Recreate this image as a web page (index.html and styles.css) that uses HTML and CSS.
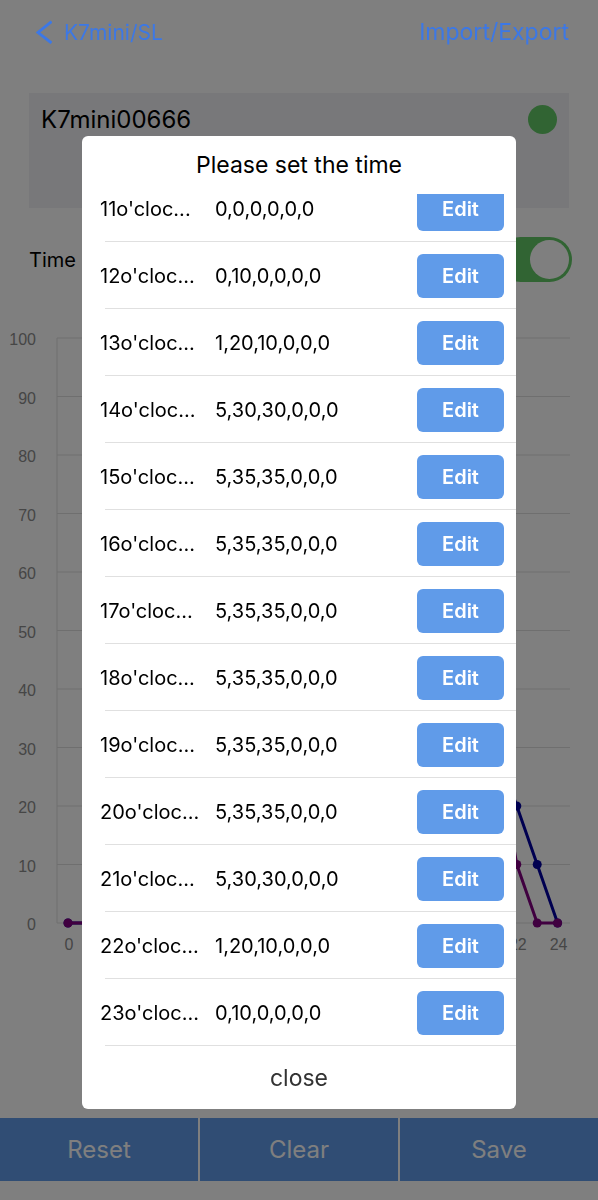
FILE: index.html
```
<!DOCTYPE html>
<html lang="en">
<head>
  <meta charset="UTF-8">
  <meta name="viewport" content="width=device-width, initial-scale=1">
  <title>K7mini/SL</title>
  <link rel="stylesheet" href="styles.css">
</head>
<body>

  <div class="page">
    <header class="navbar">
      <a class="back" href="#">
        <svg class="back-icon" viewBox="0 0 16 24" aria-hidden="true">
          <path d="M15.5 1.5 L2 12.5 L15.5 23" fill="none" stroke="currentColor" stroke-width="2.8"/>
        </svg>
        K7mini/SL
      </a>
      <a class="nav-action" href="#">Import/Export</a>
    </header>

    <main class="main">
      <section class="device">
        <span>K7mini00666</span>
        <span class="status"></span>
      </section>

      <div class="time-row">
        <label for="time-switch">Time</label>
        <input class="switch" id="time-switch" type="checkbox" role="switch" checked>
      </div>

      <svg class="chart" id="chart" viewBox="0 0 598 650"></svg>
    </main>

    <footer class="toolbar">
      <button>Reset</button>
      <button>Clear</button>
      <button>Save</button>
    </footer>
  </div>

  <!-- Popup -->
  <div class="overlay">
    <div class="modal" role="dialog" aria-labelledby="modal-title">
      <h2 class="modal-title" id="modal-title">Please set the time</h2>
      <ul class="hours">
        <li class="hour"><span class="hour-name">11o'cloc...</span><span class="hour-value">0,0,0,0,0,0</span><button class="edit">Edit</button></li>
        <li class="hour"><span class="hour-name">12o'cloc...</span><span class="hour-value">0,10,0,0,0,0</span><button class="edit">Edit</button></li>
        <li class="hour"><span class="hour-name">13o'cloc...</span><span class="hour-value">1,20,10,0,0,0</span><button class="edit">Edit</button></li>
        <li class="hour"><span class="hour-name">14o'cloc...</span><span class="hour-value">5,30,30,0,0,0</span><button class="edit">Edit</button></li>
        <li class="hour"><span class="hour-name">15o'cloc...</span><span class="hour-value">5,35,35,0,0,0</span><button class="edit">Edit</button></li>
        <li class="hour"><span class="hour-name">16o'cloc...</span><span class="hour-value">5,35,35,0,0,0</span><button class="edit">Edit</button></li>
        <li class="hour"><span class="hour-name">17o'cloc...</span><span class="hour-value">5,35,35,0,0,0</span><button class="edit">Edit</button></li>
        <li class="hour"><span class="hour-name">18o'cloc...</span><span class="hour-value">5,35,35,0,0,0</span><button class="edit">Edit</button></li>
        <li class="hour"><span class="hour-name">19o'cloc...</span><span class="hour-value">5,35,35,0,0,0</span><button class="edit">Edit</button></li>
        <li class="hour"><span class="hour-name">20o'cloc...</span><span class="hour-value">5,35,35,0,0,0</span><button class="edit">Edit</button></li>
        <li class="hour"><span class="hour-name">21o'cloc...</span><span class="hour-value">5,30,30,0,0,0</span><button class="edit">Edit</button></li>
        <li class="hour"><span class="hour-name">22o'cloc...</span><span class="hour-value">1,20,10,0,0,0</span><button class="edit">Edit</button></li>
        <li class="hour"><span class="hour-name">23o'cloc...</span><span class="hour-value">0,10,0,0,0,0</span><button class="edit">Edit</button></li>
      </ul>
      <button class="close">close</button>
    </div>
  </div>

  <script src="chart.js"></script>
</body>
</html>
```
FILE: styles.css
```
* {
  box-sizing: border-box;
}

body {
  margin: 0;
  background: #fff;
  color: #000;
  font-family: Inter, "Liberation Sans", sans-serif;
  font-size: 20px;
}

button {
  padding: 0;
  border: none;
  font: inherit;
  cursor: pointer;
}

.page {
  display: flex;
  flex-direction: column;
  min-height: 100vh;
  padding-bottom: 19px;
}

/* Navigation bar stays above the overlay */
.navbar {
  position: relative;
  z-index: 2;
  display: flex;
  justify-content: space-between;
  align-items: center;
  height: 64px;
  padding: 0 29px 0 36px;
}

.navbar a {
  color: #3c78e6;
  text-decoration: none;
}

.back {
  display: flex;
  align-items: center;
  gap: 12px;
  font-size: 21px;
}

.back-icon {
  width: 16px;
  height: 24px;
}

.nav-action {
  font-size: 23px;
}

.main {
  flex: 1;
}

.device {
  display: flex;
  justify-content: space-between;
  align-items: flex-start;
  height: 115px;
  margin: 29px;
  padding: 12px;
  background: #f0f0f5;
  font-size: 24px;
  line-height: 29px;
}

.status {
  width: 29px;
  height: 29px;
  border-radius: 50%;
  background: #62c866;
}

.time-row {
  display: flex;
  justify-content: space-between;
  align-items: center;
  padding: 0 26px 0 29px;
}

.switch {
  appearance: none;
  display: flex;
  justify-content: flex-end;
  width: 74px;
  height: 45px;
  margin: 0;
  padding: 3px;
  border-radius: 23px;
  background: #62c866;
}

.switch::before {
  content: "";
  width: 39px;
  height: 39px;
  border-radius: 50%;
  background: #fff;
}

/* Chart */
.chart {
  display: block;
  width: 100%;
  margin-top: 28px;
}

.chart text {
  fill: #8c8c8c;
  font-family: "Liberation Sans", Arial, sans-serif;
  font-size: 16px;
}

.chart .grid {
  stroke: #dedede;
  stroke-width: 1;
}

.chart polyline {
  fill: none;
  stroke-width: 3;
}

.toolbar {
  display: grid;
  grid-template-columns: repeat(3, 1fr);
  gap: 2px;
}

.toolbar button {
  height: 63px;
  background: #609be9;
  color: #fff;
  font-size: 24px;
}

/* Popup */
.overlay {
  position: fixed;
  inset: 0;
  z-index: 1;
  display: flex;
  padding: 136px 82px 91px;
  background: rgba(0, 0, 0, 0.5);
}

.modal {
  flex: 1;
  display: flex;
  flex-direction: column;
  border-radius: 6px;
  background: #fff;
}

.modal-title {
  margin: 0;
  font-size: 23px;
  font-weight: 400;
  line-height: 58px;
  text-align: center;
}

/* The list is kept at its last row, earlier hours run out at the top */
.hours {
  flex: 1;
  display: flex;
  flex-direction: column;
  justify-content: flex-end;
  min-height: 0;
  margin: 0;
  padding: 0;
  overflow: hidden;
  list-style: none;
}

.hour {
  flex: none;
  display: grid;
  grid-template-columns: 103px 1fr 87px;
  gap: 12px;
  align-items: center;
  height: 67px;
  padding: 0 12px 0 18px;
  background: linear-gradient(#e0e0e0, #e0e0e0) 23px 100% / 100% 1px no-repeat;
}

.edit {
  height: 44px;
  border-radius: 6px;
  background: #609be9;
  color: #fff;
  font-weight: 600;
}

.close {
  height: 63px;
  background: none;
  color: #333;
  font-size: 23px;
}
```
FILE: chart.js
```
const svg = document.getElementById('chart');
const left = 57;
const right = 570;
const bottom = 613;

const x = hour => 68 + hour * 20.4;
const y = value => bottom - value * 5.85;

function add(name, attrs, text) {
  const el = document.createElementNS('http://www.w3.org/2000/svg', name);
  for (const key in attrs) el.setAttribute(key, attrs[key]);
  if (text !== undefined) el.textContent = text;
  svg.appendChild(el);
}

for (let v = 0; v <= 100; v += 10) {
  add('line', { class: 'grid', x1: left, x2: right, y1: y(v), y2: y(v) });
  add('text', { x: 36, y: y(v) + 7, 'text-anchor': 'end' }, v);
}
add('line', { class: 'grid', x1: left, x2: left, y1: y(100), y2: bottom });

// only the hours that the popup leaves free
for (const h of [0, 22, 24]) {
  add('text', { x: x(h) + 1, y: bottom + 27, 'text-anchor': 'middle' }, h);
}

const series = [
  { color: '#0000a0', values: [0, 0, 0, 0, 0, 0, 0, 0, 0, 0, 0, 0, 10, 20, 30, 35, 35, 35, 35, 35, 35, 30, 20, 10, 0] },
  { color: '#800080', values: [0, 0, 0, 0, 0, 0, 0, 0, 0, 0, 0, 0, 0, 10, 30, 35, 35, 35, 35, 35, 35, 30, 10, 0, 0] }
];

for (const s of series) {
  const points = s.values.map((v, h) => `${x(h)},${y(v)}`).join(' ');
  add('polyline', { points, stroke: s.color });
  s.values.forEach((v, h) => add('circle', { cx: x(h), cy: y(v), r: 4.5, fill: s.color }));
}
```
